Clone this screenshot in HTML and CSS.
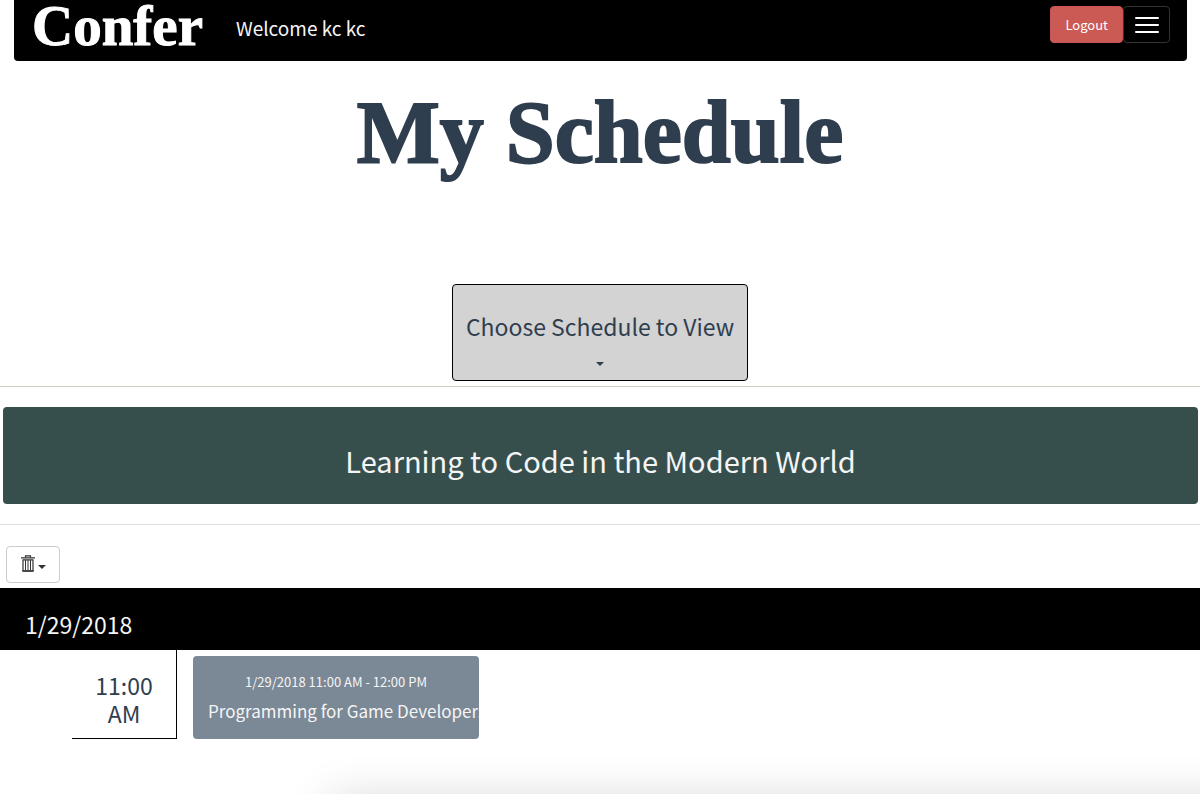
FILE: index.html
```html
<!DOCTYPE html>
<html lang="en">
<head>
<meta charset="utf-8">
<meta name="viewport" content="width=device-width, initial-scale=1">
<title>Confer - My Schedule</title>
<link rel="stylesheet" href="styles.css">
</head>
<body>
<header class="navbar">
  <a class="brand" href="#">Confer</a>
  <span class="welcome">Welcome kc kc</span>
  <div class="nav-actions">
    <button class="logout" type="button">Logout</button>
    <button class="menu" type="button" aria-label="Menu">
      <span class="bar"></span><span class="bar"></span><span class="bar"></span>
    </button>
  </div>
</header>
<main>
  <h1 class="title">My Schedule</h1>
  <div class="chooser">
    <button class="choose" type="button">Choose Schedule to View<span class="caret"></span></button>
  </div>
  <section class="conference">
    <h2 class="conference-name">Learning to Code in the Modern World</h2>
  </section>
  <div class="toolbar">
    <button class="trash" type="button" aria-label="Delete">
      <svg width="14" height="17" viewBox="0 0 14 17" aria-hidden="true">
        <path d="M4.5 2.5V.8h5v1.7M1.7 4.8h10.6M2 4.5v11.7h10V4.5" fill="none" stroke="#333" stroke-width="1.2"/>
        <path d="M4.5 5v10.5M7 5v10.5M9.5 5v10.5" fill="none" stroke="#333" stroke-width="1"/>
        <path d="M0 2.3h14v1.3H0zM1.4 15.3h11.2v1.3H1.4z" fill="#333"/>
      </svg>
      <span class="caret"></span>
    </button>
  </div>
  <h3 class="day">1/29/2018</h3>
  <div class="slot">
    <div class="hour">11:00 AM</div>
    <article class="event">
      <p class="event-time">1/29/2018 11:00 AM - 12:00 PM</p>
      <p class="event-name">Programming for Game Developers</p>
    </article>
  </div>
</main>
<div class="bottom-shade"></div>
</body>
</html>
```
FILE: styles.css
```css
* { box-sizing: border-box; }
body {
  margin: 0;
  background: #fff;
  color: #2f3e4e;
  font-family: "Noto Sans CJK SC", "Noto Sans", sans-serif;
  font-size: 13px;
}
button { font: inherit; cursor: pointer; }
h1, h2, h3, p { margin: 0; font-weight: 400; }
.navbar {
  display: flex;
  align-items: flex-start;
  margin: 0 13px 0 14px;
  padding: 0 17px 0 18px;
  height: 61px;
  background: #000;
  border-radius: 0 0 4px 4px;
  color: #f5f5f5;
}
.brand {
  font: 700 57px/52px "Liberation Serif", serif;
  -webkit-text-stroke: 1px #fff;
  color: #fff;
  text-decoration: none;
}
.welcome {
  margin-left: 33px;
  padding-top: 13px;
  font-size: 19px;
  line-height: 30px;
}
.nav-actions { display: flex; margin-left: auto; padding-top: 6px; }
.logout {
  height: 37px;
  padding: 0 14px;
  border: 1px solid #c9534f;
  border-radius: 4px;
  background: #cb5a55;
  color: #fff;
}
.menu {
  display: flex;
  flex-direction: column;
  align-items: center;
  justify-content: center;
  gap: 5px;
  width: 47px;
  height: 37px;
  border: 1px solid #333;
  border-radius: 4px;
  background: #000;
}
.bar { width: 24px; height: 2px; border-radius: 1px; background: #fff; }
.title {
  padding-top: 17px;
  font: 700 88px/110px "Liberation Serif", serif;
  -webkit-text-stroke: 2px #2f3e4e;
  text-align: center;
}
.chooser {
  display: flex;
  justify-content: center;
  margin-top: 96px;
  padding-bottom: 5px;
  border-bottom: 1px solid #cfd1c4;
}
.choose {
  display: flex;
  flex-direction: column;
  align-items: center;
  height: 97px;
  padding: 23px 13px 0;
  border: 1px solid #000;
  border-radius: 4px;
  background: #d3d3d3;
  color: #2f3e4e;
  font-size: 23px;
  line-height: 36px;
}
.caret {
  width: 0;
  border: 4px solid transparent;
  border-top-color: currentColor;
  border-bottom: 0;
}
.choose .caret { margin-top: 18px; }
.conference { padding: 20px 2px 20px 3px; border-bottom: 1px solid #ddd; }
.conference-name {
  padding: 31px 16px 21px;
  border-radius: 4px;
  background: #364f4d;
  color: #f5f5f5;
  font-size: 29px;
  line-height: 45px;
  text-align: center;
}
.toolbar { padding: 21px 6px 5px; }
.trash {
  display: flex;
  align-items: center;
  gap: 3px;
  height: 37px;
  padding: 0 13px 2px 14px;
  border: 1px solid #ccc;
  border-radius: 4px;
  background: #fff;
  color: #333;
}
.trash .caret { margin-top: 6px; }
.day {
  padding: 19px 25px 9px;
  background: #000;
  color: #f5f5f5;
  font-size: 23px;
  line-height: 34px;
}
.slot { display: flex; align-items: flex-start; padding-left: 72px; }
.hour {
  width: 105px;
  padding: 21px 20px 11px;
  border-right: 1px solid #000;
  border-bottom: 1px solid #000;
  font-size: 23px;
  line-height: 28px;
  text-align: center;
}
.event {
  width: 286px;
  margin: 6px 0 0 16px;
  padding: 15px 15px 14px;
  border-radius: 4px;
  background: #7b8896;
  color: #f5f5f5;
  overflow: hidden;
}
.event-time { line-height: 22px; text-align: center; }
.event-name { padding-top: 4px; font-size: 17px; line-height: 28px; white-space: nowrap; }
.bottom-shade {
  position: fixed;
  left: 330px;
  right: -60px;
  bottom: -60px;
  height: 50px;
  box-shadow: 0 0 50px rgba(0, 0, 0, 0.2);
}
```
